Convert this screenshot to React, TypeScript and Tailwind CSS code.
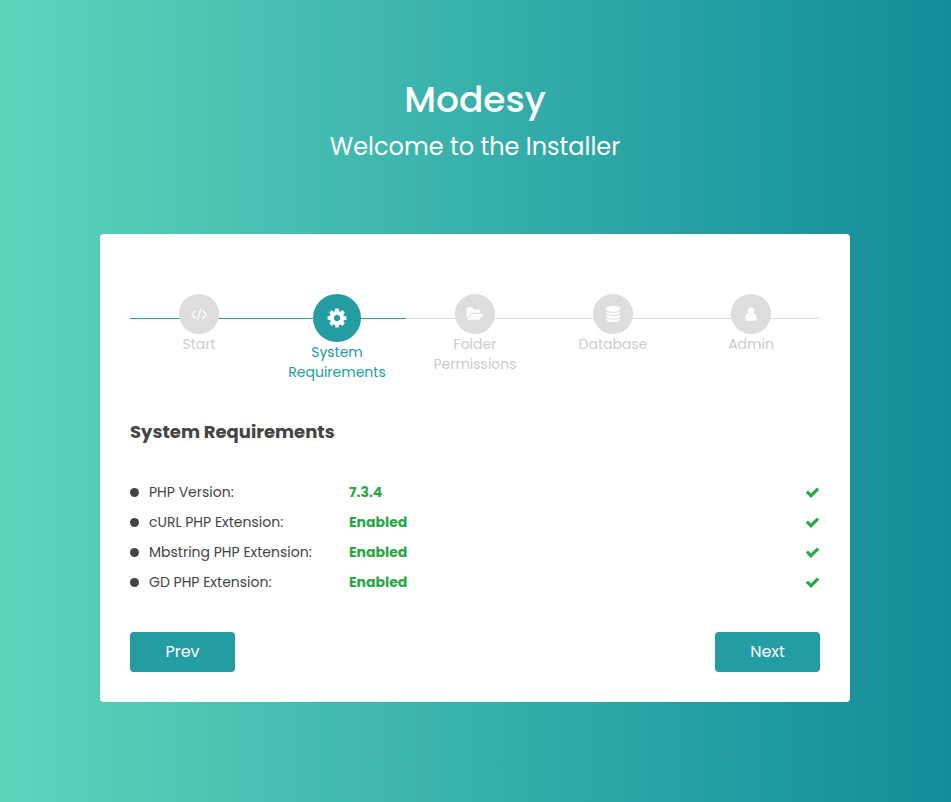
type IconName = 'code' | 'cog' | 'folder' | 'database' | 'user' | 'check';

const icons: Record<IconName, { box: string; d: string }> = {
  code: {
    box: '0 0 2048 1792',
    d: 'M681 1399l-50 50q-10 10-23 10t-23-10l-466-466q-10-10-10-23t10-23l466-466q10-10 23-10t23 10l50 50q10 10 10 23t-10 23l-393 393 393 393q10 10 10 23t-10 23zm591-1067l-373 1291q-4 13-15.5 19.5t-23.5 2.5l-62-17q-13-4-19.5-15.5t-2.5-24.5l373-1291q4-13 15.5-19.5t23.5-2.5l62 17q13 4 19.5 15.5t2.5 24.5zm657 651l-466 466q-10 10-23 10t-23-10l-50-50q-10-10-10-23t10-23l393-393-393-393q-10-10-10-23t10-23l50-50q10-10 23-10t23 10l466 466q10 10 10 23t-10 23z',
  },
  cog: {
    box: '0 0 1792 1792',
    d: 'M1152 896q0-106-75-181t-181-75-181 75-75 181 75 181 181 75 181-75 75-181zm512-109v222q0 12-8 23t-20 13l-185 28q-19 54-39 91 35 50 107 138 10 12 10 25t-9 23q-27 37-99 108t-94 71q-12 0-26-9l-138-108q-44 23-91 38-16 136-29 186-7 28-36 28h-222q-14 0-24.5-8.5t-11.5-21.5l-28-184q-49-16-90-37l-141 107q-10 9-25 9-14 0-25-11-126-114-165-168-7-10-7-23 0-12 8-23 15-21 51-66.5t54-70.5q-27-50-41-99l-183-27q-13-2-21-12.5t-8-23.5v-222q0-12 8-23t19-13l186-28q14-46 39-92-40-57-107-138-10-12-10-24 0-10 9-23 26-36 98.5-107.5t94.5-71.5q13 0 26 10l138 107q44-23 91-38 16-136 29-186 7-28 36-28h222q14 0 24.5 8.5t11.5 21.5l28 184q49 16 90 37l142-107q9-9 24-9 13 0 25 10 129 119 165 170 7 8 7 22 0 12-8 23-15 21-51 66.5t-54 70.5q26 50 41 98l183 28q13 2 21 12.5t8 23.5z',
  },
  folder: {
    box: '0 0 1943 1792',
    d: 'M1943 952q0 31-31 66l-336 396q-43 51-120.5 86.5t-143.5 35.5h-1088q-34 0-60.5-13t-26.5-43q0-31 31-66l336-396q43-51 120.5-86.5t143.5-35.5h1088q34 0 60.5 13t26.5 43zm-343-344v160h-832q-94 0-197 47.5t-164 119.5l-337 396-5 6q0-4-.5-12.5t-.5-12.5v-960q0-92 66-158t158-66h320q92 0 158 66t66 158v32h544q92 0 158 66t66 158z',
  },
  database: {
    box: '0 0 1792 1792',
    d: 'M896 768q237 0 443-43t325-127v170q0 69-103 128t-280 93.5-385 34.5-385-34.5-280-93.5-103-128v-170q119 84 325 127t443 43zm0 768q237 0 443-43t325-127v170q0 69-103 128t-280 93.5-385 34.5-385-34.5-280-93.5-103-128v-170q119 84 325 127t443 43zm0-384q237 0 443-43t325-127v170q0 69-103 128t-280 93.5-385 34.5-385-34.5-280-93.5-103-128v-170q119 84 325 127t443 43zm0-1152q208 0 385 34.5t280 93.5 103 128v128q0 69-103 128t-280 93.5-385 34.5-385-34.5-280-93.5-103-128v-128q0-69 103-128t280-93.5 385-34.5z',
  },
  user: {
    box: '0 0 1792 1792',
    d: 'M1536 1399q0 109-62.5 187t-150.5 78h-854q-88 0-150.5-78t-62.5-187q0-85 8.5-160.5t31.5-152 58.5-131 94-89 134.5-34.5q131 128 313 128t313-128q76 0 134.5 34.5t94 89 58.5 131 31.5 152 8.5 160.5zm-256-887q0 159-112.5 271.5t-271.5 112.5-271.5-112.5-112.5-271.5 112.5-271.5 271.5-112.5 271.5 112.5 112.5 271.5z',
  },
  check: {
    box: '0 0 1792 1792',
    d: 'M1671 566q0 40-28 68l-724 724-136 136q-28 28-68 28t-68-28l-136-136-362-362q-28-28-28-68t28-68l136-136q28-28 68-28t68 28l294 295 656-657q28-28 68-28t68 28l136 136q28 28 28 68z',
  },
};

function Icon({ name, className }: { name: IconName; className: string }) {
  return (
    <svg viewBox={icons[name].box} fill="currentColor" aria-hidden="true" className={className}>
      <path d={icons[name].d} />
    </svg>
  );
}

const steps: { icon: IconName; label: string; active?: boolean }[] = [
  { icon: 'code', label: 'Start' },
  { icon: 'cog', label: 'System Requirements', active: true },
  { icon: 'folder', label: 'Folder Permissions' },
  { icon: 'database', label: 'Database' },
  { icon: 'user', label: 'Admin' },
];

const requirements = [
  { name: 'PHP Version:', value: '7.3.4' },
  { name: 'cURL PHP Extension:', value: 'Enabled' },
  { name: 'Mbstring PHP Extension:', value: 'Enabled' },
  { name: 'GD PHP Extension:', value: 'Enabled' },
];

const buttonClass =
  'h-10 w-[105px] rounded bg-[#239ca2] text-base text-white hover:bg-[#1d8a90]';

export default function App() {
  return (
    <div className="min-h-screen bg-linear-to-r from-[#5bd5ba] via-[#239ea3] via-75% to-[#148c98] pt-20 pr-px pb-[100px] font-[Poppins,Inter,sans-serif] text-sm text-[#444]">
      <header className="text-center text-white">
        <h1 className="text-4xl leading-10 font-medium">Modesy</h1>
        <p className="mt-3 text-2xl leading-[30px]">Welcome to the Installer</p>
      </header>

      <main className="mx-auto mt-[72px] max-w-[750px] rounded bg-white px-[30px] pt-[60px] pb-[30px]">
        <div className="relative">
          <div className="absolute inset-x-0 top-6 h-px bg-[#ddd]">
            <div className="h-full w-2/5 bg-[#239ca2]" />
          </div>
          <ol className="relative grid grid-cols-5 text-center leading-5">
            {steps.map((step) => (
              <li
                key={step.label}
                aria-current={step.active ? 'step' : undefined}
                className={`flex flex-col items-center ${step.active ? 'text-[#239ca2]' : 'text-[#ccc]'}`}
              >
                <span
                  className={`flex items-center justify-center rounded-full text-white ${
                    step.active ? 'size-12 bg-[#239ca2]' : 'size-10 bg-[#ddd]'
                  }`}
                >
                  <Icon name={step.icon} className={step.active ? 'h-[22px]' : 'h-4'} />
                </span>
                <span className="px-5">{step.label}</span>
              </li>
            ))}
          </ol>
        </div>

        <h2 className="mt-[38px] text-lg leading-6 font-bold">System Requirements</h2>

        <ul className="mt-[33px]">
          {requirements.map((item) => (
            <li key={item.name} className="flex h-[30px] items-center">
              <span className="mr-2.5 size-[9px] rounded-full bg-[#444]" />
              <span className="w-[200px]">{item.name}</span>
              <strong className="font-bold text-[#28a745]">{item.value}</strong>
              <Icon name="check" className="ml-auto h-[15px] text-[#28a745]" />
            </li>
          ))}
        </ul>

        <div className="mt-[35px] flex justify-between">
          <button type="button" className={buttonClass}>Prev</button>
          <button type="button" className={buttonClass}>Next</button>
        </div>
      </main>
    </div>
  );
}
